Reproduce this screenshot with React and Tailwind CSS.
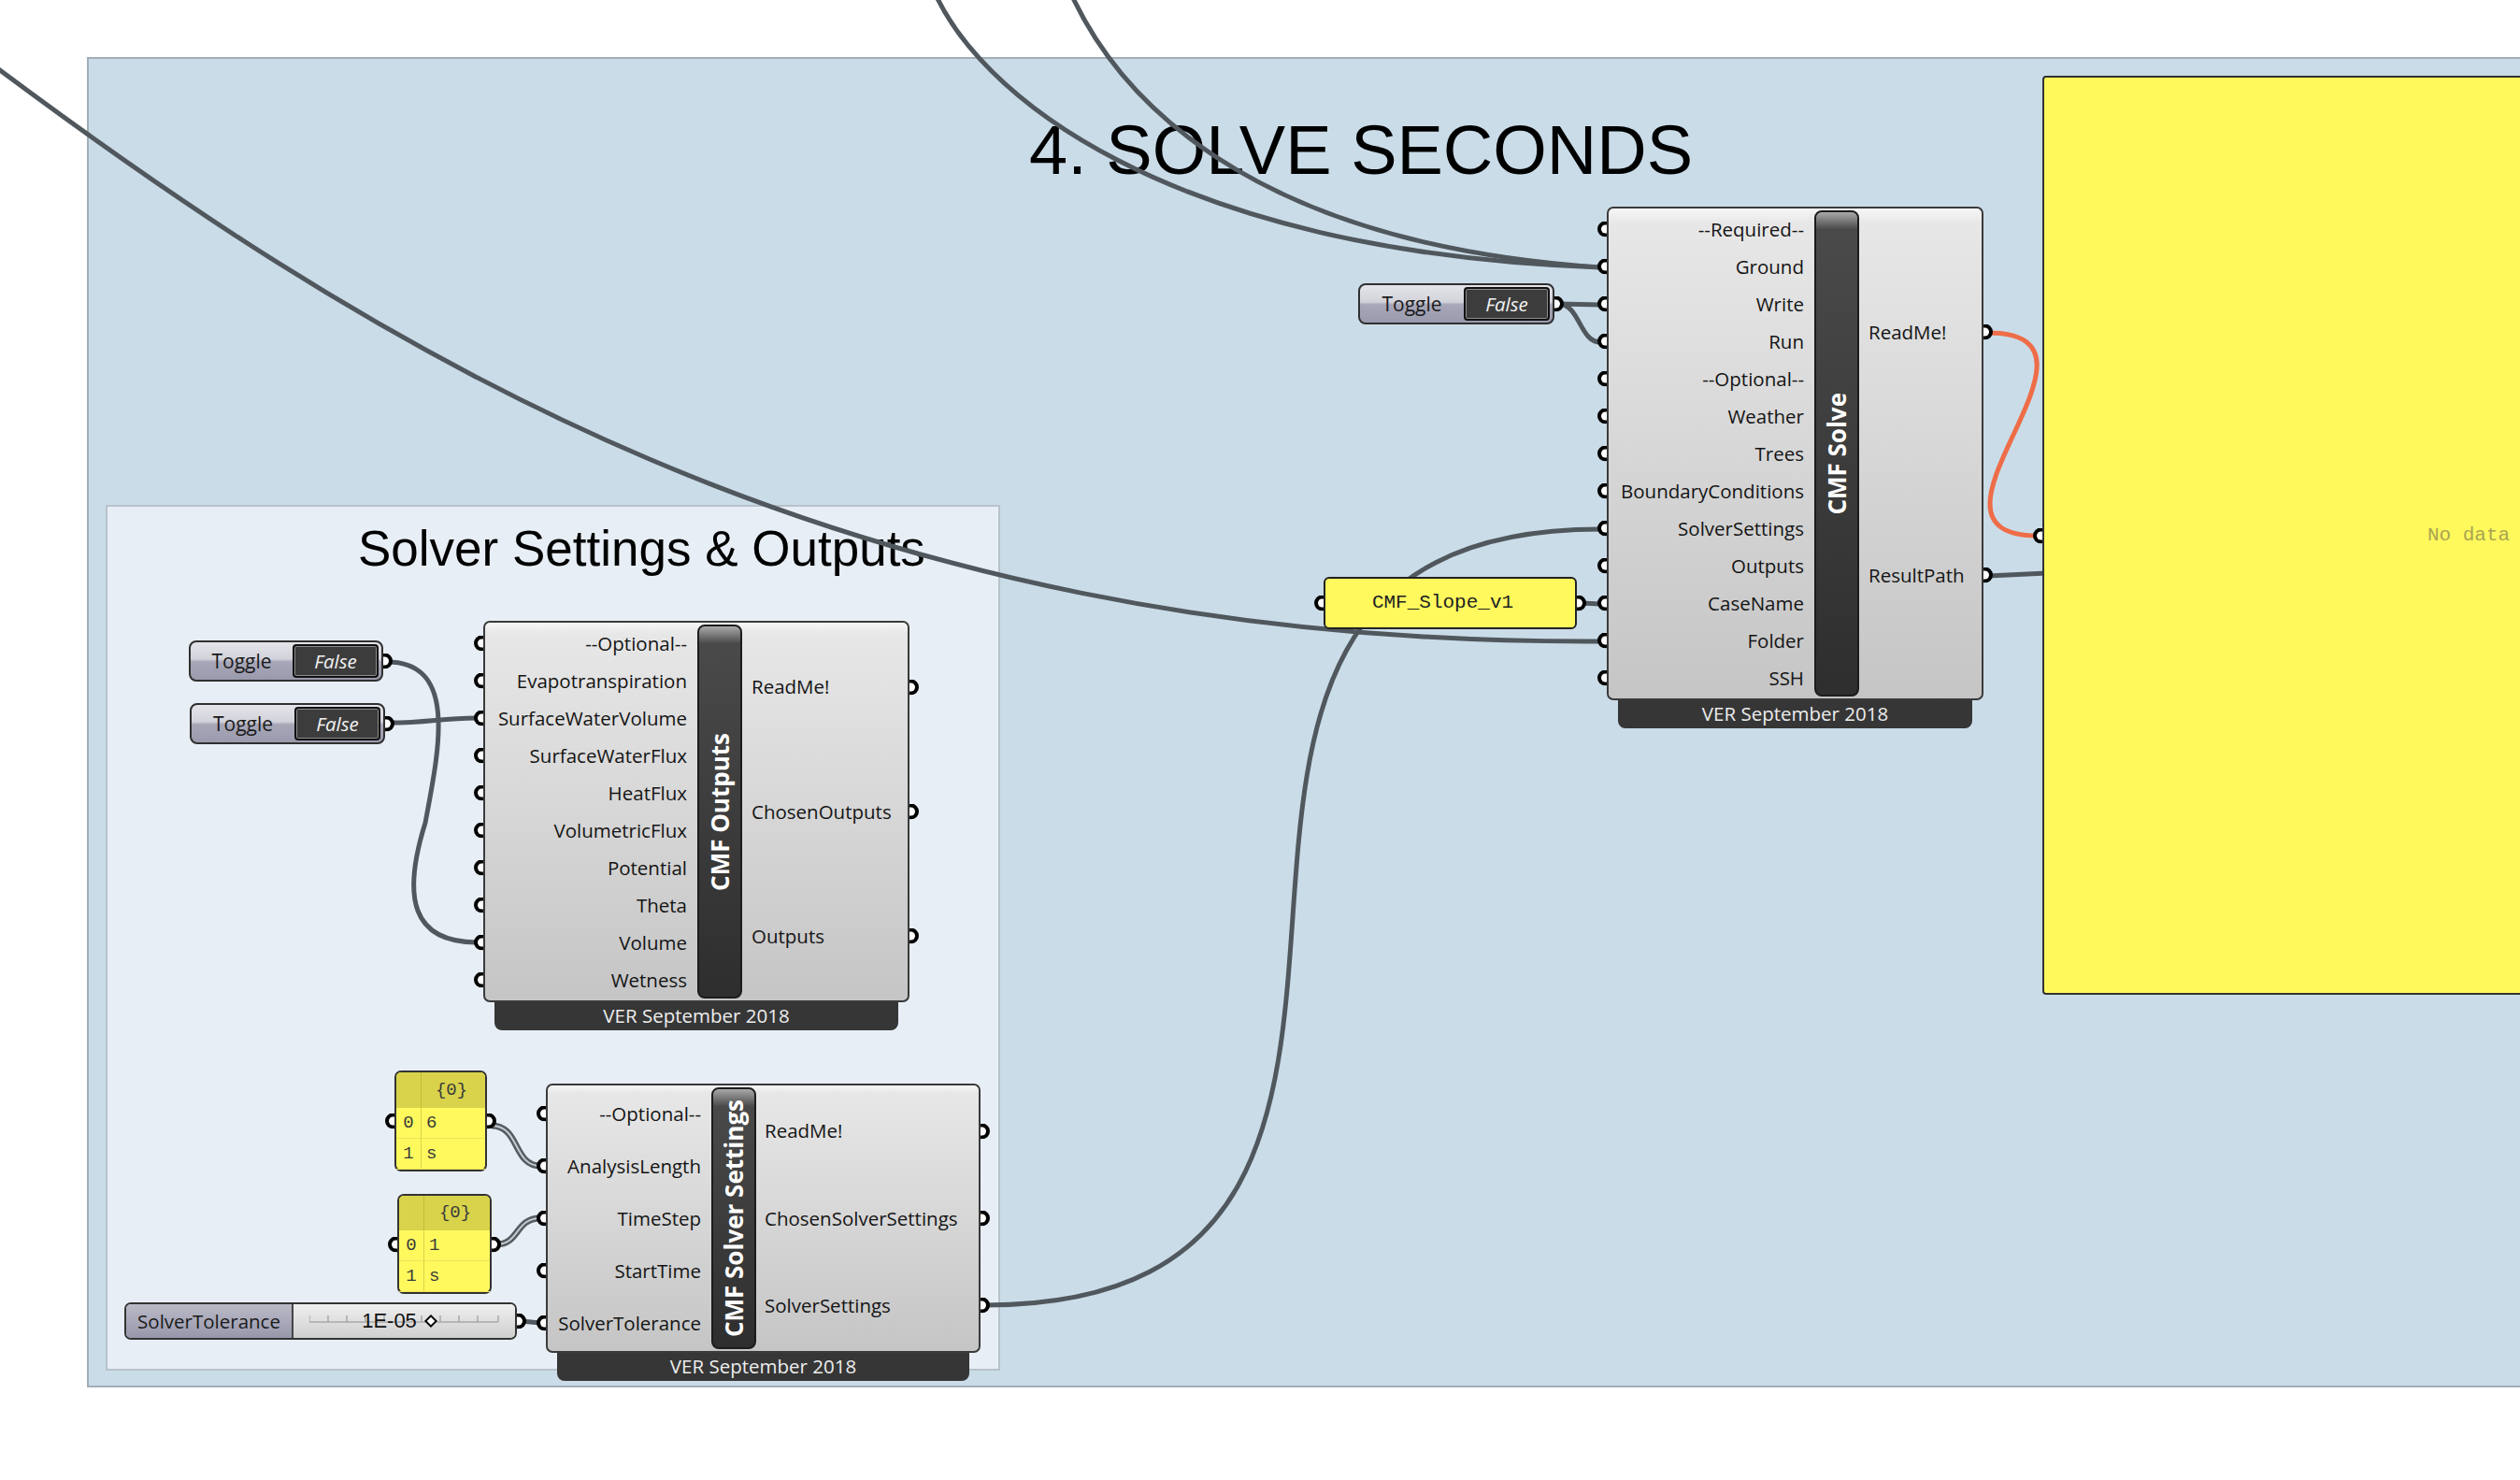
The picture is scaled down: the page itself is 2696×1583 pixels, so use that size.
import React from "react";

const solveInputs = ["--Required--", "Ground", "Write", "Run", "--Optional--", "Weather", "Trees", "BoundaryConditions", "SolverSettings", "Outputs", "CaseName", "Folder", "SSH"];
const outputsInputs = ["--Optional--", "Evapotranspiration", "SurfaceWaterVolume", "SurfaceWaterFlux", "HeatFlux", "VolumetricFlux", "Potential", "Theta", "Volume", "Wetness"];
const settingsInputs = ["--Optional--", "AnalysisLength", "TimeStep", "StartTime", "SolverTolerance"];

// plain wires, drawn under the components
const wires = [
    "M -60 30 C 400 380, 900 690, 1712 686",
    "M 995 -20 C 1040 100, 1250 270, 1712 286",
    "M 1140 -20 C 1190 100, 1330 260, 1712 286",
    "M 1667 325 L 1712 326",
    "M 1667 325 C 1690 325, 1690 366, 1712 366",
    "M 1691 645 L 1712 646",
    "M 1054 1396 C 1654 1396, 1112 566, 1712 566",
    "M 2127 616 L 2190 613",
    "M 414 708 C 490 708, 470 800, 455 880 C 430 960, 440 1008, 511 1008",
    "M 416 773 C 460 773, 470 768, 511 768",
    "M 557 1413 L 578 1415",
];

// list wires (drawn doubled)
const listWires = [
    "M 526 1204 C 556 1204, 549 1247, 578 1247",
    "M 531 1331 C 556 1331, 551 1303, 578 1303",
];

const Port = ({side}) => (
    side === "left"
        ? <span className="absolute left-[-12px] top-1/2 h-[17px] w-[10px] -translate-y-1/2 rounded-l-full border-4 border-r-0 border-black bg-white" />
        : <span className="absolute right-[-12px] top-1/2 h-[17px] w-[10px] -translate-y-1/2 rounded-r-full border-4 border-l-0 border-black bg-white" />
);

const GhComponent = ({box, inW, rowH, outPad, inputs, outputs, name}) => (
    <div className={`absolute flex flex-col ${box}`}>
        <div className="relative flex rounded-[7px] border-2 border-[#3a3a3a] bg-[linear-gradient(to_bottom,#f6f6f6_0%,#e7e7e7_3%,#c5c5c5_100%)] py-[2px]">
            <div className={`flex flex-col ${inW}`}>
                {inputs.map((label) => (
                    <div key={label} className={`relative flex items-center justify-end pr-[11px] ${rowH}`}>
                        <Port side="left" />
                        <span className="leading-none">{label}</span>
                    </div>
                ))}
            </div>
            <div className="relative flex w-[48px] items-center justify-center overflow-hidden rounded-[8px] border-2 border-[#1c1c1c] bg-[linear-gradient(to_bottom,#4b4b4b,#2e2e2e)]">
                <div className="absolute inset-x-0 top-0 h-[18px] bg-[linear-gradient(to_bottom,#a9a9a9,#4b4b4b)]" />
                <span className="relative rotate-180 text-[26px] font-bold leading-none text-white [writing-mode:vertical-rl]">{name}</span>
            </div>
            <div className="flex flex-1 flex-col">
                {outputs.map((label) => (
                    <div key={label} className={`relative flex flex-1 items-center ${outPad}`}>
                        <span className="leading-none">{label}</span>
                        <Port side="right" />
                    </div>
                ))}
            </div>
        </div>
        <div className="mx-[12px] h-[30px] rounded-b-[8px] bg-[#363636] text-center text-[20.5px] leading-[29px] text-[#ededed]">VER September 2018</div>
    </div>
);

const Toggle = ({box}) => (
    <div className={`absolute flex h-[44px] items-center rounded-[8px] border-2 border-[#303030] bg-[linear-gradient(to_bottom,#e4e4ea_0%,#d2d2da_45%,#a7a7b8_52%,#9a9aad_100%)] pr-[3px] ${box}`}>
        <span className="flex-1 text-center text-[21px] leading-none text-[#1a1a1a]">Toggle</span>
        <div className="flex h-[36px] w-[92px] items-center justify-center rounded-[4px] border-2 border-[#111] bg-[#3c3c3c] text-[20.5px] italic leading-none text-[#f2f2f2] shadow-[inset_0_0_0_1px_#8c8c8c]">False</div>
        <Port side="right" />
    </div>
);

const DataPanel = ({box, headH, rows, restH}) => (
    <div className={`absolute flex flex-col rounded-[7px] border-2 border-[#333] bg-[#fff95e] font-['Liberation_Mono',monospace] text-[19px] text-[#3a3a3a] ${box}`}>
        <Port side="left" />
        <div className={`flex rounded-t-[5px] bg-[#d8d34a] ${headH}`}>
            <div className="w-[27px] border-r border-[#c2bd3c]" />
            <div className="flex flex-1 items-center justify-center pr-[4px]">{"{0}"}</div>
        </div>
        {rows.map(([i, v]) => (
            <div key={i} className="flex h-[33px] border-b border-[#ece456]">
                <div className="flex w-[27px] items-center justify-center border-r border-[#d9d248]">{i}</div>
                <div className="flex items-center pl-[5px]">{v}</div>
            </div>
        ))}
        <div className={`flex ${restH}`}>
            <div className="w-[27px] border-r border-[#d9d248]" />
        </div>
        <Port side="right" />
    </div>
);

const Slider = () => (
    <div className="absolute left-[133px] top-[1393px] flex h-[40px] w-[420px] rounded-[7px] border-2 border-[#333]">
        <div className="flex w-[179px] items-center justify-center rounded-l-[5px] border-r-2 border-[#444] bg-[linear-gradient(to_bottom,#b9b9c6_0%,#a9a9ba_50%,#9797ab_100%)] text-[20.5px] leading-none text-[#1a1a1a]">SolverTolerance</div>
        <div className="relative flex flex-1 items-center justify-center rounded-r-[5px] bg-[linear-gradient(to_bottom,#efefef,#cfcfcf)]">
            <svg className="absolute left-[17px] top-[10px]" width="204" height="12" viewBox="0 0 204 12">
                <line x1="0" y1="9" x2="202" y2="9" stroke="#a8a8a8" strokeWidth="1.5" />
                {[0, 20, 40, 60, 80, 120, 140, 160, 180, 202].map((x) => (
                    <line key={x} x1={x} y1="2" x2={x} y2="9" stroke="#a8a8a8" strokeWidth="1.5" />
                ))}
            </svg>
            <div className="relative flex items-center gap-[10px] pr-[12px] font-['Liberation_Sans',Arial,sans-serif] text-[22px] leading-none text-[#111]">
                <span>1E-05</span>
                <span className="h-[10px] w-[10px] rotate-45 border-2 border-black bg-white" />
            </div>
        </div>
        <Port side="right" />
    </div>
);

const App = () => {
    return (
        <div className="relative h-[1583px] w-[2696px] overflow-hidden bg-white font-['Open_Sans',sans-serif] text-[20.5px] text-[#141414]">
            {/* groups */}
            <div className="absolute left-[93px] top-[61px] h-[1423px] w-[2700px] border-2 border-[#a3aeb6] bg-[#cadce8] pl-[1006px] pt-[61px]">
                <h1 className="font-['Liberation_Sans',Arial,sans-serif] text-[74px] leading-none text-black">4. SOLVE SECONDS</h1>
            </div>
            <div className="absolute left-[113px] top-[540px] h-[926px] w-[957px] border-2 border-[#b7c2ca] bg-[#e8eef5] pl-[268px] pt-[18px]">
                <h2 className="font-['Liberation_Sans',Arial,sans-serif] text-[53px] leading-none text-black">Solver Settings &amp; Outputs</h2>
            </div>

            {/* wires */}
            <svg className="pointer-events-none absolute left-0 top-0" width="2696" height="1583" viewBox="0 0 2696 1583">
                {wires.map((d) => (
                    <path key={d} d={d} fill="none" stroke="#50585e" strokeWidth="5" />
                ))}
                {listWires.map((d) => (
                    <g key={d}>
                        <path d={d} fill="none" stroke="#555c61" strokeWidth="7" />
                        <path d={d} fill="none" stroke="#c4ccd2" strokeWidth="2" />
                    </g>
                ))}
                <path d="M 2127 356 C 2282 356, 2027 573, 2180 573" fill="none" stroke="#ee6d48" strokeWidth="5" />
            </svg>

            {/* right yellow panel */}
            <div className="absolute left-[2185px] top-[81px] flex h-[983px] w-[912px] items-center justify-center rounded-[4px] border-2 border-[#333] bg-[#fff95b]">
                <Port side="left" />
                <span className="font-['Liberation_Mono',monospace] text-[21px] text-[#a9a352]">No data</span>
            </div>

            <GhComponent
                box="left-[1719px] top-[221px] w-[403px]"
                inW="w-[220px]"
                rowH="h-[40px]"
                outPad="pl-[10px]"
                inputs={solveInputs}
                outputs={["ReadMe!", "ResultPath"]}
                name="CMF Solve"
            />
            <GhComponent
                box="left-[517px] top-[664px] w-[456px]"
                inW="w-[227px]"
                rowH="h-[40px]"
                outPad="pl-[10px]"
                inputs={outputsInputs}
                outputs={["ReadMe!", "ChosenOutputs", "Outputs"]}
                name="CMF Outputs"
            />
            <GhComponent
                box="left-[584px] top-[1159px] w-[465px]"
                inW="w-[175px]"
                rowH="h-[56px]"
                outPad="pl-[9px]"
                inputs={settingsInputs}
                outputs={["ReadMe!", "ChosenSolverSettings", "SolverSettings"]}
                name="CMF Solver Settings"
            />

            <Toggle box="left-[1453px] top-[303px] w-[210px]" />
            <Toggle box="left-[202px] top-[685px] w-[208px]" />
            <Toggle box="left-[203px] top-[752px] w-[209px]" />

            <div className="absolute left-[1416px] top-[617px] flex h-[56px] w-[271px] items-center justify-center rounded-[6px] border-2 border-[#222] bg-[#fff95e] font-['Liberation_Mono',monospace] text-[21px] text-[#222]">
                <Port side="left" />
                <span className="pr-[16px]">CMF_Slope_v1</span>
                <Port side="right" />
            </div>

            <DataPanel box="left-[422px] top-[1145px] w-[99px]" headH="h-[38px]" rows={[["0", "6"], ["1", "s"]]} restH="flex-1" />
            <DataPanel box="left-[425px] top-[1277px] w-[101px]" headH="h-[37px]" rows={[["0", "1"], ["1", "s"]]} restH="flex-1" />

            <Slider />
        </div>
    );
};

export default App;
